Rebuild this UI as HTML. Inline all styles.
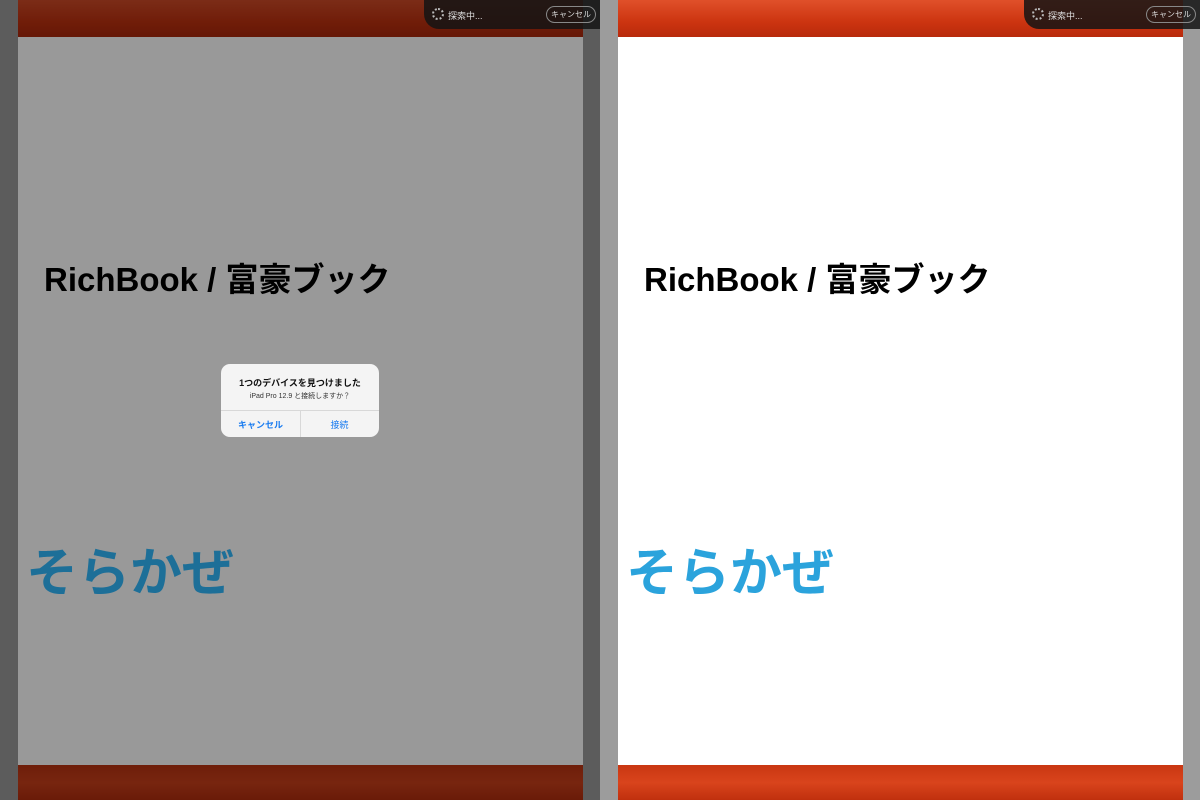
<!DOCTYPE html>
<html><head><meta charset="utf-8"><style>
*{margin:0;padding:0;box-sizing:border-box}
body{width:1200px;height:800px;position:relative;overflow:hidden;font-family:"Liberation Sans","Noto Sans CJK JP",sans-serif;background:#8f8f8f}
.abs{position:absolute}
.hdr{background:linear-gradient(#e0502a,#cc3410 60%,#b82a0c)}
.ftr{background:linear-gradient(#c93712,#d9441c 50%,#c0300e)}
.title{font-weight:bold;font-size:33px;color:#000;white-space:nowrap}
.sora{font-weight:bold;font-size:52px;color:#2ba3dc;letter-spacing:0px;white-space:nowrap}
.pill{height:29px;width:176px;border-radius:0 0 0 15px;background:rgba(20,20,20,.85);color:#ddd;font-size:9px}
.pill .t{position:absolute;left:24px;top:9px}
.pill .c{position:absolute;left:122px;top:6px;border:1px solid #888;border-radius:9px;padding:2px 4px;font-size:8px}
.spin{position:absolute;left:8px;top:8px;width:12px;height:12px;border-radius:50%;border:2px dotted #bbb}
</style></head><body>
<div class="abs" style="left:0;top:0;width:600px;height:800px;background:#5c5c5c"></div>
<div class="abs" style="left:600px;top:0;width:600px;height:800px;background:#9c9c9c"></div>
<div class="abs" style="left:618px;top:0;width:565px;height:800px;background:#fff"></div>
<div class="abs hdr" style="left:618px;top:0;width:565px;height:37px"></div>
<div class="abs ftr" style="left:618px;top:765px;width:565px;height:35px"></div>
<div class="abs title" style="left:644px;top:253px">RichBook / 富豪ブック</div>
<div class="abs sora" style="left:626px;top:531px">そらかぜ</div>
<div class="abs" style="left:18px;top:0;width:565px;height:800px;background:#999"></div>
<div class="abs hdr" style="left:18px;top:0;width:565px;height:37px;filter:brightness(.55)"></div>
<div class="abs ftr" style="left:18px;top:765px;width:565px;height:35px;filter:brightness(.55)"></div>
<div class="abs title" style="left:44px;top:253px">RichBook / 富豪ブック</div>
<div class="abs sora" style="left:26px;top:531px;color:#1d6f98">そらかぜ</div>
<div class="abs pill" style="left:424px;top:0"><div class="spin"></div><span class="t">探索中...</span><span class="c">キャンセル</span></div>
<div class="abs pill" style="left:1024px;top:0"><div class="spin"></div><span class="t">探索中...</span><span class="c">キャンセル</span></div>
<div class="abs" style="left:221px;top:364px;width:158px;height:73px;background:#f4f4f4;border-radius:9px;text-align:center;overflow:hidden">
<div style="font-size:9px;font-weight:bold;margin-top:12px;color:#111">1つのデバイスを見つけました</div>
<div style="font-size:7px;margin-top:2px;color:#333">iPad Pro 12.9 と接続しますか？</div>
<div style="position:absolute;left:0;top:46px;width:158px;border-top:1px solid #d8d8d8"></div>
<div style="position:absolute;left:79px;top:46px;height:27px;border-left:1px solid #d8d8d8"></div>
<div style="position:absolute;left:0;top:54px;width:79px;font-size:9px;color:#1a7cf0;font-weight:bold">キャンセル</div>
<div style="position:absolute;left:79px;top:54px;width:79px;font-size:9px;color:#1a7cf0">接続</div>
</div>
</body></html>
